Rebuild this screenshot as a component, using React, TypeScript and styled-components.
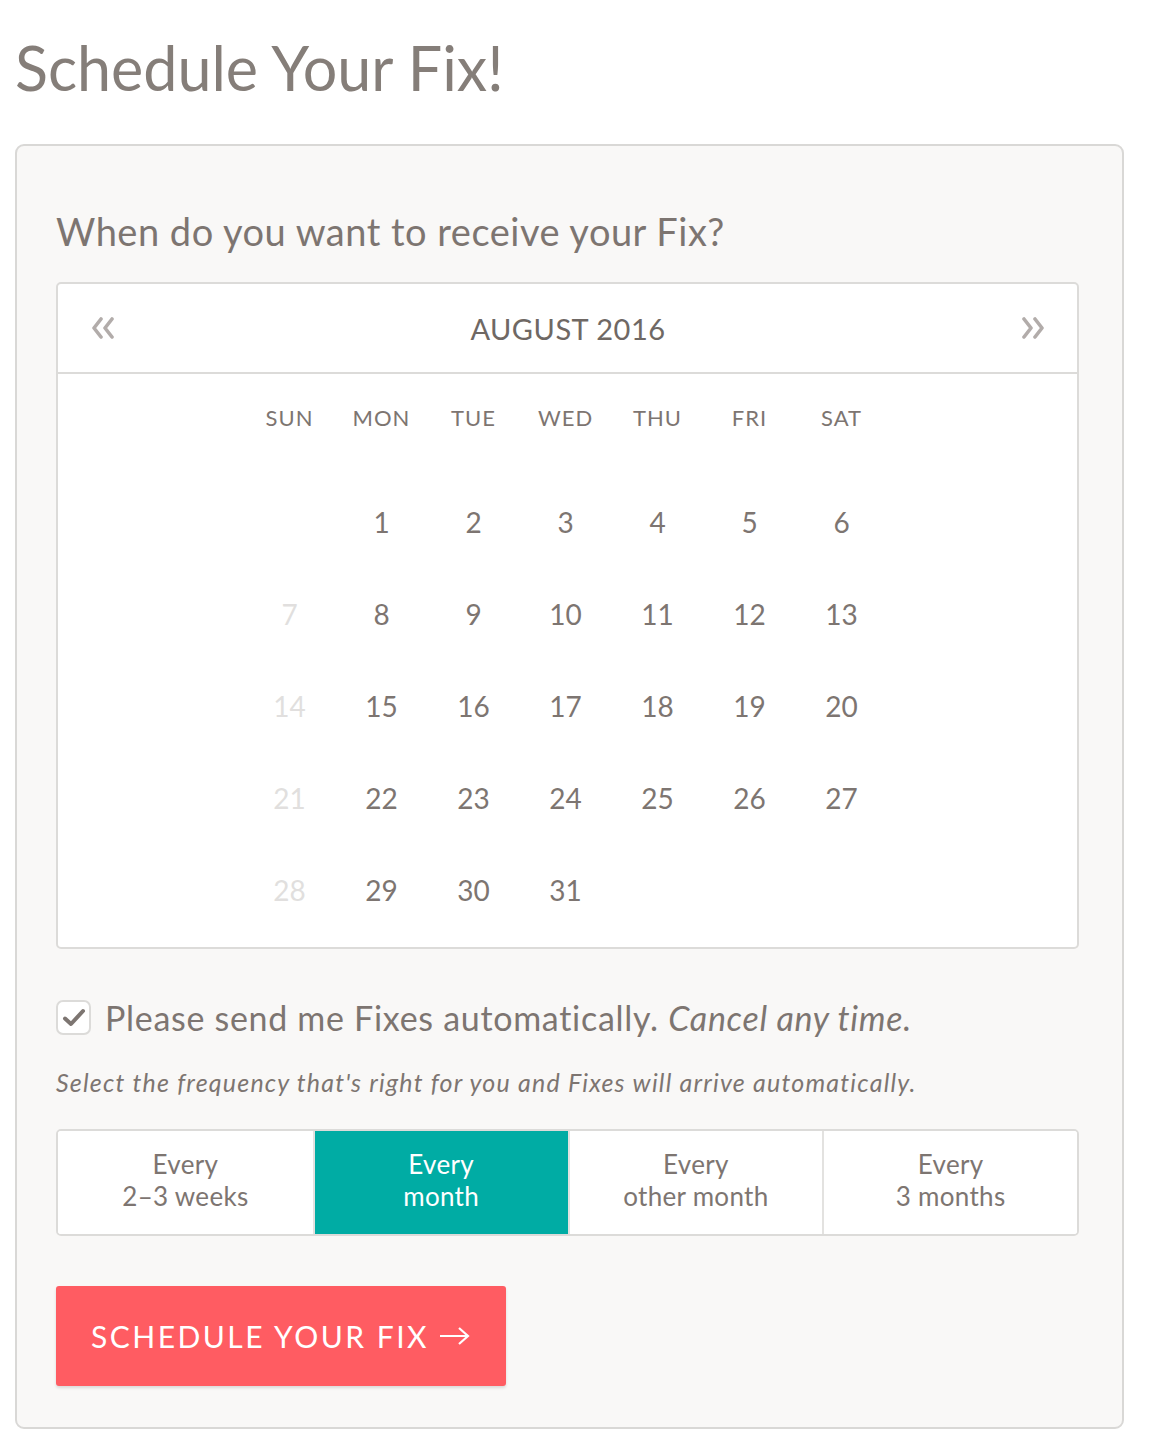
import React from "react";
import styled, { createGlobalStyle } from "styled-components";

const Global = createGlobalStyle`
  html, body { margin: 0; padding: 0; background: #ffffff; }
  body { font-family: Lato, "Open Sans", sans-serif; color: #7d7571; }
`;

const Page = styled.div`
  width: 1153px;
  padding: 20px 30px 0 15px;
  box-sizing: border-box;
`;

const Title = styled.h1`
  margin: 0;
  font-family: Lato, sans-serif;
  font-weight: 400;
  font-size: 61px;
  line-height: 96px;
  color: #857e79;
  letter-spacing: 0px;
`;

const Card = styled.section`
  margin-top: 28px;
  width: 1109px;
  height: 1285px;
  box-sizing: border-box;
  border: 2px solid #d9d8d6;
  border-radius: 9px;
  background: #f9f8f7;
  padding: 55px 42px 0 39px;
`;

const Question = styled.h2`
  margin: 0;
  font-family: Lato, sans-serif;
  font-weight: 400;
  font-size: 38px;
  letter-spacing: 0.5px;
  line-height: 60px;
  color: #7d7571;
`;

const Calendar = styled.div`
  margin-top: 21px;
  width: 1023px;
  height: 667px;
  box-sizing: border-box;
  background: #ffffff;
  border: 2px solid #dcdbd9;
  border-radius: 5px;
`;

const CalHeader = styled.div`
  height: 88px;
  border-bottom: 2px solid #dcdbd9;
  display: flex;
  align-items: center;
  justify-content: space-between;
  padding: 0 32px 0 33px;
`;

const NavBtn = styled.span`
  display: flex;
  width: 26px;
  height: 24px;
  align-items: center;
  justify-content: center;
`;

const Month = styled.div`
  font-family: Lato, sans-serif;
  font-size: 29px;
  letter-spacing: 0.5px;
  color: #6f6864;
`;

const Grid = styled.div`
  display: grid;
  grid-template-columns: repeat(7, 92px);
  justify-content: center;
  padding-right: 4px;
`;

const WeekRow = styled(Grid)`
  height: 87px;
  align-items: center;
  margin-bottom: 15px;
`;

const DayName = styled.div`
  text-align: center;
  font-family: Lato, sans-serif;
  font-size: 22px;
  letter-spacing: 1px;
  color: #7d7571;
`;

const DayCell = styled.div<{ $muted?: boolean }>`
  height: 92px;
  display: flex;
  align-items: center;
  justify-content: center;
  font-family: Lato, sans-serif;
  font-size: 28px;
  color: ${(p) => (p.$muted ? "#e1dfde" : "#7d7571")};
`;

const CheckRow = styled.label`
  margin-top: 48px;
  display: flex;
  align-items: center;
  gap: 14px;
  font-family: Lato, sans-serif;
  font-size: 34px;
  letter-spacing: 0.7px;
  color: #7d7571;
  em { font-style: italic; }
`;

const Box = styled.span`
  width: 35px;
  height: 35px;
  flex: none;
  box-sizing: border-box;
  border: 2px solid #dcdbd9;
  border-radius: 7px;
  background: #fff;
  display: flex;
  align-items: center;
  justify-content: center;
`;

const Hint = styled.p`
  margin: 29px 0 0;
  font-family: Lato, sans-serif;
  font-style: italic;
  font-size: 25px;
  color: #7d7571;
  letter-spacing: 1.2px;
`;

const Segments = styled.div`
  margin-top: 32px;
  width: 1023px;
  height: 107px;
  box-sizing: border-box;
  display: grid;
  grid-template-columns: repeat(4, 1fr);
  border: 2px solid #dcdbd9;
  border-radius: 5px;
  background: #fff;
  overflow: hidden;
`;

const Segment = styled.div<{ $active?: boolean }>`
  display: flex;
  flex-direction: column;
  align-items: center;
  justify-content: center;
  padding-bottom: 6px;
  font-family: Lato, sans-serif;
  font-size: 26px;
  line-height: 32px;
  letter-spacing: 0.3px;
  background: ${(p) => (p.$active ? "#00aca4" : "#fff")};
  color: ${(p) => (p.$active ? "#ffffff" : "#7d7571")};
  margin: ${(p) => (p.$active ? "-2px 0" : "0")};
  & + & { border-left: 2px solid #e3e2e0; }
`;

const Cta = styled.button`
  margin-top: 50px;
  width: 450px;
  height: 100px;
  border: none;
  border-radius: 3px;
  background: #ff5c62;
  color: #fff;
  font-family: Lato, sans-serif;
  font-size: 30px;
  letter-spacing: 2.5px;
  display: flex;
  align-items: center;
  justify-content: center;
  gap: 10px;
  box-shadow: 0 2px 3px rgba(0, 0, 0, 0.12);
`;

const weekdays = ["SUN", "MON", "TUE", "WED", "THU", "FRI", "SAT"];
const cells: (number | null)[] = [null, ...Array.from({ length: 31 }, (_, i) => i + 1)];
const options = [
  ["Every", "2–3 weeks"],
  ["Every", "month"],
  ["Every", "other month"],
  ["Every", "3 months"],
];

const Chevrons = ({ dir }: { dir: "left" | "right" }) => (
  <svg width="24" height="22" viewBox="0 0 24 22" style={dir === "right" ? { transform: "scaleX(-1)" } : undefined}>
    <path d="M9 2 L2 11 L9 20" fill="none" stroke="#b2acaa" strokeWidth="3.6" strokeLinejoin="round" strokeLinecap="round" />
    <path d="M20 2 L13 11 L20 20" fill="none" stroke="#b2acaa" strokeWidth="3.6" strokeLinejoin="round" strokeLinecap="round" />
  </svg>
);

export default function App() {
  return (
    <>
      <Global />
      <Page>
        <Title>Schedule Your Fix!</Title>
        <Card>
          <Question>When do you want to receive your Fix?</Question>
          <Calendar>
            <CalHeader>
              <NavBtn><Chevrons dir="left" /></NavBtn>
              <Month>AUGUST 2016</Month>
              <NavBtn><Chevrons dir="right" /></NavBtn>
            </CalHeader>
            <WeekRow>
              {weekdays.map((d) => (
                <DayName key={d}>{d}</DayName>
              ))}
            </WeekRow>
            <Grid>
              {cells.map((n, i) => (
                <DayCell key={i} $muted={n !== null && i % 7 === 0}>
                  {n ?? ""}
                </DayCell>
              ))}
            </Grid>
          </Calendar>
          <CheckRow>
            <Box>
              <svg width="24" height="20" viewBox="0 0 24 20">
                <path d="M3 10.5 L9 16 L21 3" fill="none" stroke="#7d7571" strokeWidth="4" strokeLinecap="round" strokeLinejoin="round" />
              </svg>
            </Box>
            <span>
              Please send me Fixes automatically. <em>Cancel any time.</em>
            </span>
          </CheckRow>
          <Hint>Select the frequency that's right for you and Fixes will arrive automatically.</Hint>
          <Segments>
            {options.map((o, i) => (
              <Segment key={i} $active={i === 1}>
                <span>{o[0]}</span>
                <span>{o[1]}</span>
              </Segment>
            ))}
          </Segments>
          <Cta>
            SCHEDULE YOUR FIX
            <svg width="32" height="20" viewBox="0 0 32 20">
              <path d="M1 10 H29 M20 2 L29 10 L20 18" fill="none" stroke="#fff" strokeWidth="2.2" />
            </svg>
          </Cta>
        </Card>
      </Page>
    </>
  );
}
